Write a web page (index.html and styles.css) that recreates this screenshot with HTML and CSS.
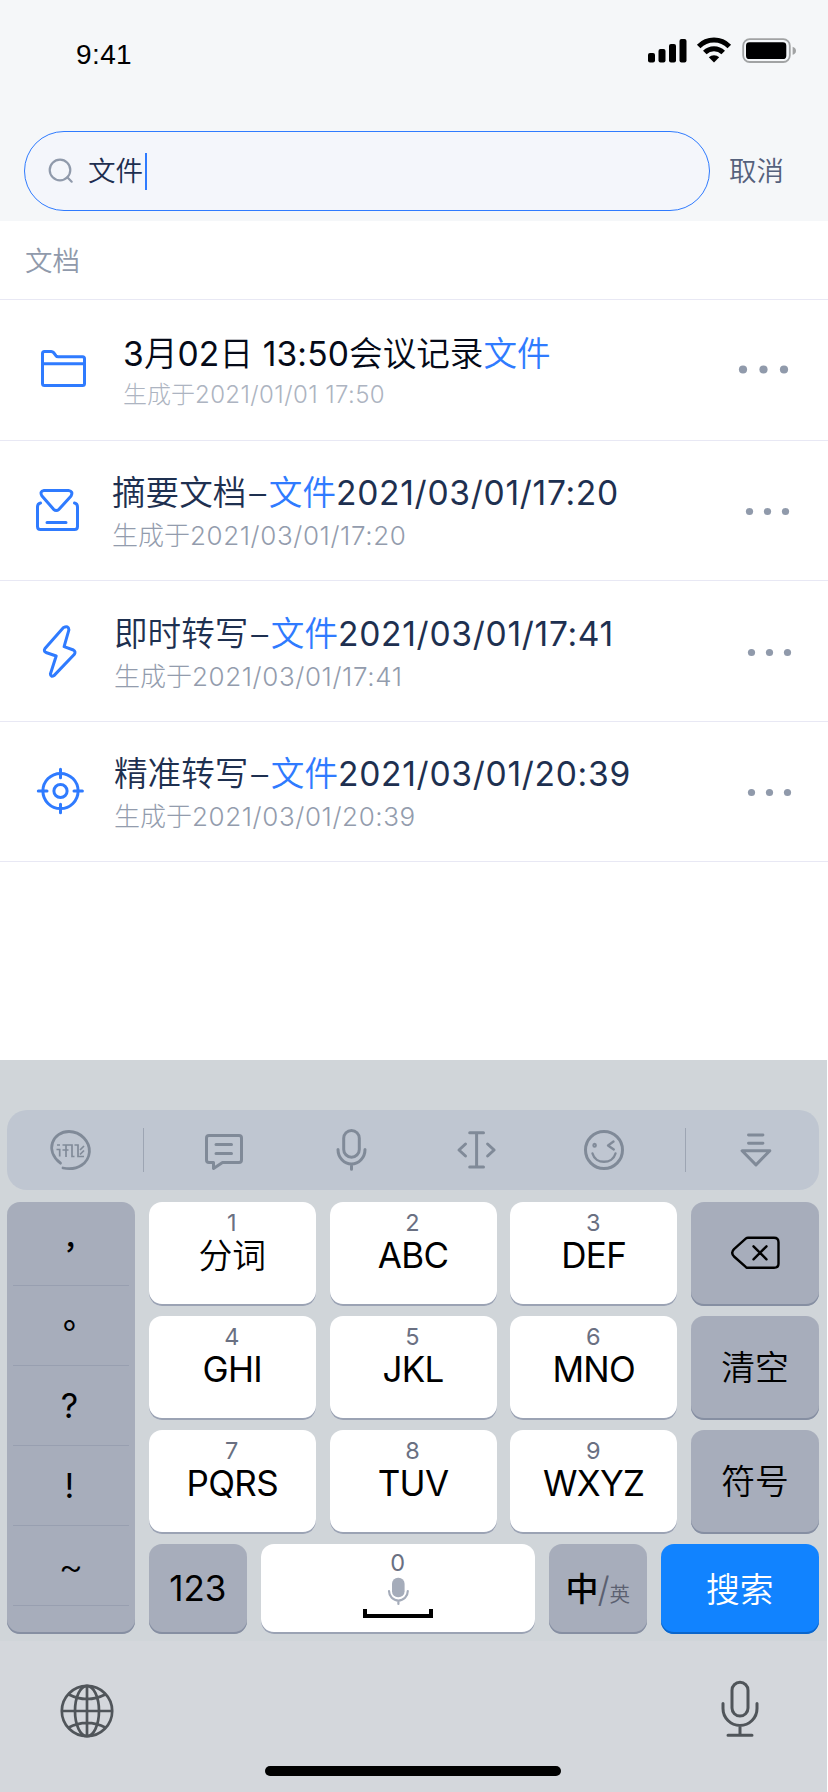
FILE: index.html
```html
<!DOCTYPE html>
<html lang="zh-CN">
<head>
<meta charset="utf-8">
<title>搜索</title>
<link rel="stylesheet" href="styles.css">
</head>
<body>
<div class="screen">
  <header class="top">
    <div class="status">
      <span class="time">9:41</span>
      <svg class="signals" width="152" height="30" viewBox="646 36 152 30">
        <rect x="648" y="53" width="7" height="9.6" rx="2"/>
        <rect x="658.5" y="49" width="7" height="13.6" rx="2"/>
        <rect x="669" y="44" width="7" height="18.6" rx="2"/>
        <rect x="679.5" y="39" width="7" height="23.6" rx="2"/>
        <g fill="none" stroke="#000" stroke-width="5">
          <path d="M698.7 46.4a21.6 21.6 0 0 1 30.6 0"/>
          <path d="M704.8 52.6a13 13 0 0 1 18.4 0"/>
        </g>
        <path d="M708.8 57.2a7.6 7.6 0 0 1 10.4 0L714 62.4z"/>
        <rect x="743.2" y="39.2" width="46.6" height="22.8" rx="6.5" fill="none" stroke="#a1a3a4" stroke-width="1.8"/>
        <rect x="746" y="42.3" width="40.3" height="16.8" rx="3.4"/>
        <path d="M792.6 46.8q3.4 1 3.4 4t-3.4 4z" fill="#a1a3a4"/>
      </svg>
    </div>
    <div class="search-row">
      <div class="search">
        <svg width="28" height="28" viewBox="47 157 28 28" fill="none" stroke="#909aab" stroke-width="2.2" stroke-linecap="round"><circle cx="60" cy="170" r="10.3"/><path d="M67.3 177.3l4.4 4.4"/></svg>
        <span class="query">文件</span><i class="caret"></i>
      </div>
      <span class="cancel">取消</span>
    </div>
  </header>

  <main class="results">
    <h2 class="section">文档</h2>
    <article class="row row-a">
      <svg width="110" height="140" viewBox="0 300 110 140" class="ico"><path d="M42.5 383.5v-30q0-2 2-2h6.7q1.5 0 2.3 1l2.4 3.2q.8 1 2.3 1h24.3q2 0 2 2v24.8q0 2-2 2h-38q-2 0-2-2zM42.5 363.8h42"/></svg>
      <div class="text">
        <p class="name"><span class="n1">3</span>月<span class="n1">02</span>日<span class="n1"> 13:50</span>会议记录<em>文件</em></p>
        <p class="date">生成于<span>2021/01/01 17:50</span></p>
      </div>
      <svg class="more" width="88" height="140" viewBox="740 300 88 140"><circle cx="743" cy="369.5" r="4.1"/><circle cx="763.5" cy="369.5" r="4.1"/><circle cx="784" cy="369.5" r="4.1"/></svg>
    </article>
    <article class="row row-b">
      <svg width="110" height="139" viewBox="0 441 110 139" class="ico"><path d="M44 490.5h24.5q5 .8 2.6 5.4L59 509.3q-2.8 2.4-5.4 0L42 496q-2.7-4.7 2-5.5zM40.5 503q-3 .6-3 4v19.5q0 3 3 3h34q3 0 3-3V507q0-3.4-3-4M47 522.4h19"/></svg>
      <div class="text">
        <p class="name"><span>摘要文档</span><span class="dash">–</span><em>文件</em><span class="n2">2021/03/01/17:20</span></p>
        <p class="date">生成于<span>2021/03/01/17:20</span></p>
      </div>
      <svg class="more" width="88" height="139" viewBox="740 441 88 139"><circle cx="749.5" cy="511.5" r="3.6"/><circle cx="767.5" cy="511.5" r="3.6"/><circle cx="785.5" cy="511.5" r="3.6"/></svg>
    </article>
    <article class="row row-c">
      <svg width="110" height="140" viewBox="0 581 110 140" class="ico"><path d="M63.5 627.5L45 648.5q-1.7 2.6 1 4L56.2 656l-5.8 18q.2 3.6 3.8 1.4l20.2-21.2q1.6-2.7-1-4.2l-9.3-3.4 4.8-16.8q-.4-4.6-5.4-2.3z"/></svg>
      <div class="text">
        <p class="name"><span>即时转写</span><span class="dash">–</span><em>文件</em><span class="n2">2021/03/01/17:41</span></p>
        <p class="date">生成于<span>2021/03/01/17:41</span></p>
      </div>
      <svg class="more" width="88" height="140" viewBox="740 581 88 140"><circle cx="751.5" cy="652.5" r="3.6"/><circle cx="769.5" cy="652.5" r="3.6"/><circle cx="787.5" cy="652.5" r="3.6"/></svg>
    </article>
    <article class="row row-d">
      <svg width="110" height="139" viewBox="0 722 110 139" class="ico"><circle cx="60.5" cy="791" r="17.6"/><circle cx="60.5" cy="791" r="6.6"/><path d="M38.3 791H47M74 791h8.4M60.5 769.3v8.5M60.5 804.3v8.5"/></svg>
      <div class="text">
        <p class="name"><span>精准转写</span><span class="dash">–</span><em>文件</em><span class="n2">2021/03/01/20:39</span></p>
        <p class="date">生成于<span>2021/03/01/20:39</span></p>
      </div>
      <svg class="more" width="88" height="139" viewBox="740 722 88 139"><circle cx="751.5" cy="792.5" r="3.6"/><circle cx="769.5" cy="792.5" r="3.6"/><circle cx="787.5" cy="792.5" r="3.6"/></svg>
    </article>
  </main>

  <section class="keyboard">
    <div class="tools">
      <svg class="tool t-logo" width="136" height="44" viewBox="7 1128 136 44"><path d="M60.500 1163.200C44 1150 53 1131.600 69 1131.500C81 1131.500 90 1142 89.400 1152C88.500 1163 78 1171 63 1168" stroke-width="2.800"/><path stroke-width="1.700" stroke-linecap="butt" stroke-linejoin="miter" d="M57 1145h3M56.500 1149.500h3.200v7M62.500 1145h9.500v11.500h2.500M62.500 1150h6M66 1145v12M74.500 1145h3.500v11.500h6M80 1150l4-4M80 1154.500l4-4"/></svg>
      <svg class="tool t-chat" width="161" height="44" viewBox="144 1128 161 44"><path d="M209 1135.500h30q2.500 0 2.500 2.500v22q0 2.500-2.500 2.500h-16.500l-9 6v-6H209q-2.500 0-2.500-2.500v-22q0-2.500 2.500-2.500zM216 1144.500h15.500M216 1153.500h15.500"/></svg>
      <svg class="tool" width="110" height="44" viewBox="305 1128 110 44"><rect x="343.700" y="1130.500" width="15.600" height="26.700" rx="7.800"/><path d="M338 1149.500a13.500 14.500 0 0 0 27 0M351.500 1164.500v4.800"/></svg>
      <svg class="tool" width="115" height="44" viewBox="415 1128 115 44"><path d="M469.700 1132.700h13.800M469.700 1167h13.800M476.600 1133v34M465.500 1144l-6.500 6 6.500 6M487.600 1144l6.500 6-6.500 6"/></svg>
      <svg class="tool t-face" width="155" height="44" viewBox="530 1128 155 44"><circle cx="604" cy="1150" r="18.500"/><ellipse cx="594.600" cy="1145.300" rx="1.300" ry="1.500" stroke-width="2"/><path stroke-width="2.400" d="M613.500 1141.600l-5.500 3.800 5.800 4M592.500 1153.500c3 11 20 11 23 0"/></svg>
      <svg class="tool t-hide" width="133" height="44" viewBox="686 1128 133 44"><path d="M749 1134.800h14.500M749 1143.200h14.500M742.500 1150.700h28L756.500 1165z"/></svg>
    </div>
    <div class="keys">
      <div class="punct">
        <span class="comma">，</span><span class="stop">。</span><span>?</span><span>!</span><span class="tilde">~</span>
      </div>
      <div class="key"><small>1</small><b class="cn">分词</b></div>
      <div class="key"><small>2</small><b>ABC</b></div>
      <div class="key"><small>3</small><b>DEF</b></div>
      <div class="key gray del"><svg width="52" height="36" viewBox="729 1235 52 36" fill="none" stroke="#000" stroke-width="2.400" stroke-linecap="round" stroke-linejoin="round"><path d="M748 1237.700h26q4.500 0 4.500 4.500v21.600q0 4-4.500 4h-26q-1.200 0-2-.6l-12-10.700q-3.600-3.800 0-7.400l12-10.700q.8-.7 2-.7zM753.500 1246.300l13 13M766.500 1246.300l-13 13"/></svg></div>
      <div class="key"><small>4</small><b>GHI</b></div>
      <div class="key"><small>5</small><b>JKL</b></div>
      <div class="key"><small>6</small><b>MNO</b></div>
      <div class="key gray"><b class="cn">清空</b></div>
      <div class="key"><small>7</small><b>PQRS</b></div>
      <div class="key"><small>8</small><b>TUV</b></div>
      <div class="key"><small>9</small><b>WXYZ</b></div>
      <div class="key gray"><b class="cn">符号</b></div>
      <div class="last">
        <div class="key gray"><b class="num">123</b></div>
        <div class="key space"><small>0</small>
          <svg width="74" height="44" viewBox="361 1576 74 44"><rect x="392" y="1577.800" width="12.600" height="19.400" rx="6" fill="#a5acba"/><path d="M389 1591a9.400 9.600 0 0 0 18.800 0M398.400 1600.500v3.500" fill="none" stroke="#a5acba" stroke-width="2.200" stroke-linecap="round"/><path d="M365 1609v7h66v-7" fill="none" stroke="#000" stroke-width="4"/></svg>
        </div>
        <div class="key gray lang"><b class="zh">中</b><i>/</i><span>英</span></div>
        <div class="key blue"><b class="cn">搜索</b></div>
      </div>
    </div>
    <footer class="bottom">
      <div class="bottom-icons">
        <svg width="54" height="54" viewBox="59.700 1684.300 54 54" fill="none" stroke="#50555a" stroke-width="2.700"><circle cx="86.700" cy="1711.300" r="25.200"/><ellipse cx="86.700" cy="1711.300" rx="12" ry="25.200"/><path d="M86.700 1686v50.500M61.500 1711.300h50.500M68 1694.500q18.700 9.600 37.400 0M68 1728q18.700-9.600 37.400 0"/></svg>
        <svg width="40" height="60" viewBox="719.500 1679 40 60" fill="none" stroke="#50555a" stroke-width="3" stroke-linecap="round"><rect x="731.500" y="1682.300" width="16" height="33.800" rx="8"/><path d="M722.500 1703.500v5a17 17 0 0 0 34 0v-5M739.500 1726v9M727.500 1735.300h24"/></svg>
      </div>
      <div class="home"></div>
    </footer>
  </section>
</div>
</body>
</html>
```
FILE: styles.css
```css
* { box-sizing: border-box; }
body { margin: 0; background: #fff; font-family: Inter, "Noto Sans CJK SC", sans-serif; font-weight: 350; }
p, h2 { margin: 0; font-weight: 350; }
em, i { font-weight: 350; font-style: normal; }
b, small { font-weight: 400; }
svg { display: block; flex: none; }
.screen { width: 828px; height: 1792px; overflow: hidden; display: flex; flex-direction: column; background: #fff; }

.top { height: 221px; background: #f5f7f9; flex: none; }
.status { height: 131px; padding: 36px 30px 0 76px; display: flex; justify-content: space-between; align-items: flex-start; }
.time { font: 28px/37px "Liberation Sans", sans-serif; letter-spacing: .4px; color: #000; }
.search-row { display: flex; align-items: center; padding-left: 24px; }
.search { width: 686px; height: 80px; border: 1px solid #2f7bff; border-radius: 40px; background: #f4f6fb; display: flex; align-items: center; padding-left: 22px; }
.query { margin-left: 13px; font-size: 27.600px; line-height: 40px; color: #1d2e50; }
.caret { width: 2px; height: 37px; background: #2f7bff; margin-left: 2px; }
.cancel { margin-left: 19px; font-size: 27.500px; line-height: 40px; color: #55617c; }

.results { height: 839px; flex: none; }
.section { height: 79px; border-bottom: 1px solid #e8e8f4; padding: 20px 0 0 25px; font-size: 27.500px; line-height: 40px; color: #909aab; }
.row { display: flex; border-bottom: 1px solid #e8e8f4; color: #1e3050; }
.row .text { flex: 1; white-space: nowrap; }
.ico { fill: none; stroke: #2f7bff; stroke-width: 3; stroke-linecap: round; stroke-linejoin: round; }
.more { fill: #909aab; overflow: visible; }
.name { font-size: 33.600px; line-height: 46px; }
.name em { color: #2f7bff; }
.n1 { font-weight: 400; letter-spacing: .15px; }
.n2 { font-weight: 400; letter-spacing: .7px; }
.dash { display: inline-block; width: 22.500px; text-align: center; }
.date { font-size: 26px; line-height: 32px; color: #939cad; font-weight: 300; }
.date span { letter-spacing: .6px; }
.row-a { height: 141px; }
.row-a .text { padding: 31px 0 0 13px; color: #050a18; }
.row-a .date { font-size: 24px; margin-top: 2px; color: #adb4c1; }
.row-a .date span { letter-spacing: .4px; }
.row-b { height: 140px; }
.row-b .text { padding: 29px 0 0 2px; }
.row-b .date, .row-c .date, .row-d .date { margin-top: 4px; }
.row-c { height: 141px; }
.row-c .text { padding: 30px 0 0 4px; }
.row-d { height: 140px; }
.row-d .text { padding: 29px 0 0 4px; }

.keyboard { width: 827px; height: 732px; background: #d0d5d9; padding-top: 50px; flex: none; }
.tools { margin: 0 8px 0 7px; height: 80px; border-radius: 20px; background: #bfc6d1; display: flex; align-items: center; }
.tool { fill: none; stroke: #808a98; stroke-width: 3; stroke-linecap: round; stroke-linejoin: round; }
.t-logo { border-right: 1px solid #9da5b3; width: 137px; }
.t-face { border-right: 1px solid #9da5b3; width: 156px; }
.t-hide { width: 132px; }
.keys { margin: 12px 8px 0 7px; display: grid; grid-template-columns: 128px 167px 167px 167px 128px; column-gap: 13.750px; grid-template-rows: 104px 104px 104px 90px; row-gap: 10px; }
.punct { grid-row: 1 / 5; background: #a7adbb; border-radius: 13px; box-shadow: inset 0 -2px 0 #868fa2; padding: 4px 6px 0; display: flex; flex-direction: column; }
.punct span { height: 80px; border-bottom: 1px solid #989fb0; text-align: center; font-size: 34px; font-weight: 400; line-height: 79px; color: #000; padding-right: 3px; }
.punct .comma, .punct .stop { font-family: "Noto Sans CJK SC", sans-serif; font-weight: 500; text-align: left; }
.punct .comma { font-size: 29px; line-height: 61px; padding-left: 50px; }
.punct .stop { font-size: 33px; line-height: 56px; padding-left: 50px; }
.punct .tilde { font-size: 38px; font-weight: 300; line-height: 80px; padding: 0; }
.key { background: #fff; border-radius: 13px; box-shadow: inset 0 -2px 0 #9ba3b4; display: flex; flex-direction: column; align-items: center; color: #000; }
.key small { font-size: 23.500px; line-height: 28px; margin-top: 7px; color: #6a7082; padding-right: 1px; }
.key b { font-size: 35px; line-height: 40px; letter-spacing: -.7px; margin-top: -2px; }
.key .cn { font-size: 33.800px; font-weight: 350; letter-spacing: 0; margin-top: -1px; }
.gray { background: #a7adbb; box-shadow: inset 0 -2px 0 #868fa2; justify-content: center; }
.gray .num { letter-spacing: 0; margin-top: -3px; }
.del { padding-bottom: 2px; }
.blue { background: #1183ff; box-shadow: inset 0 -2px 0 #0b66cb; color: #fff; justify-content: center; }
.blue .cn { margin-top: 1px; }
.last { grid-column: 2 / 6; display: grid; grid-template-columns: 98px 274px 98px 158px; column-gap: 14px; }
.space small { margin-top: 5px; margin-bottom: -1px; padding: 0; }
.lang { flex-direction: row; align-items: center; }
.lang .zh { font-size: 33px; font-weight: 500; letter-spacing: 0; margin: 0; }
.lang i { font-size: 35px; color: #5b6070; font-weight: 300; margin-left: -1px; }
.lang span { font-size: 20.500px; color: #5b6070; padding-top: 7px; }

.bottom { margin-top: 7px; height: 151px; background: #d4d7dc; display: flex; flex-direction: column; }
.bottom-icons { height: 125px; padding: 38px 67px 0 59.700px; display: flex; justify-content: space-between; align-items: flex-start; }
.bottom-icons svg:first-child { margin-top: 5px; }
.home { width: 296px; height: 10px; border-radius: 5px; background: #000; margin-left: 265px; }
```
